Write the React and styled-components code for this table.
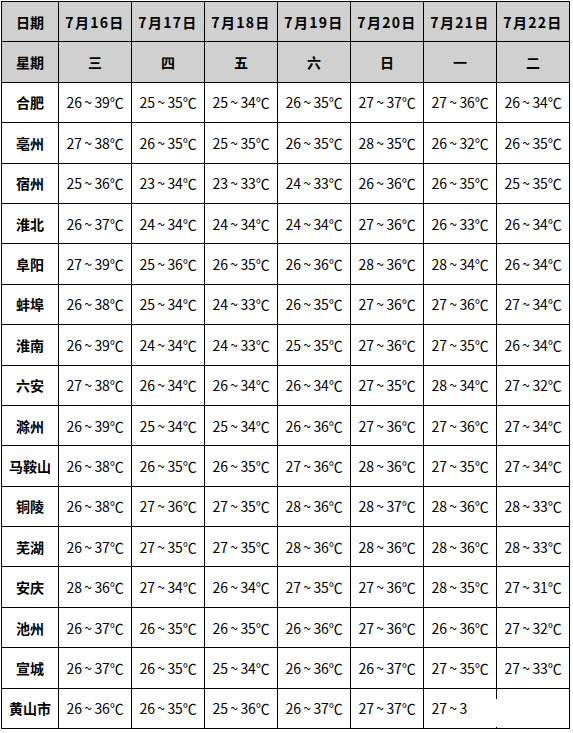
import React from "react";
import styled, { createGlobalStyle } from "styled-components";

const GlobalStyle = createGlobalStyle`
  html, body {
    margin: 0;
    padding: 0;
    background: #ffffff;
  }
  body {
    font-family: "Noto Sans CJK SC", "Noto Sans", sans-serif;
  }
`;

const dates = ["7月16日", "7月17日", "7月18日", "7月19日", "7月20日", "7月21日", "7月22日"];
const weekdays = ["三", "四", "五", "六", "日", "一", "二"];

// city, then low/high per day
const rows = [
  ["合肥", "26~39", "25~35", "25~34", "26~35", "27~37", "27~36", "26~34"],
  ["亳州", "27~38", "26~35", "25~35", "26~35", "28~35", "26~32", "26~35"],
  ["宿州", "25~36", "23~34", "23~33", "24~33", "26~36", "26~35", "25~35"],
  ["淮北", "26~37", "24~34", "24~34", "24~34", "27~36", "26~33", "26~34"],
  ["阜阳", "27~39", "25~36", "26~35", "26~36", "28~36", "28~34", "26~34"],
  ["蚌埠", "26~38", "25~34", "24~33", "26~35", "27~36", "27~36", "27~34"],
  ["淮南", "26~39", "24~34", "24~33", "25~35", "27~36", "27~35", "26~34"],
  ["六安", "27~38", "26~34", "26~34", "26~34", "27~35", "28~34", "27~32"],
  ["滁州", "26~39", "25~34", "25~34", "26~36", "27~36", "27~36", "27~34"],
  ["马鞍山", "26~38", "26~35", "26~35", "27~36", "28~36", "27~35", "27~34"],
  ["铜陵", "26~38", "27~36", "27~35", "28~36", "28~37", "28~36", "28~33"],
  ["芜湖", "26~37", "27~35", "27~35", "28~36", "28~36", "28~36", "28~33"],
  ["安庆", "28~36", "27~34", "26~34", "27~35", "27~36", "28~35", "27~31"],
  ["池州", "26~37", "26~35", "26~35", "26~36", "27~36", "26~36", "27~32"],
  ["宣城", "26~37", "26~35", "25~34", "26~36", "26~37", "27~35", "27~33"],
  ["黄山市", "26~36", "26~35", "25~36", "26~37", "27~37", "27~36", "27~33"],
];

export default function App() {
  return (
    <Page>
      <GlobalStyle />
      <TableWrap>
        <Grid>
          <HeadCell>日期</HeadCell>
          {dates.map((d) => (
            <HeadCell key={d} $spaced>
              {d}
            </HeadCell>
          ))}
          <HeadCell>星期</HeadCell>
          {weekdays.map((w) => (
            <HeadCell key={w}>{w}</HeadCell>
          ))}
          {rows.map((row) => (
            <React.Fragment key={row[0]}>
              <CityCell>{row[0]}</CityCell>
              {row.slice(1).map((t, i) => (
                <TempCell key={i}>{t.replace("~", "\u2009~\u2009")}℃</TempCell>
              ))}
            </React.Fragment>
          ))}
        </Grid>
        {/* blank patch covering the last cells */}
        <Cover />
      </TableWrap>
    </Page>
  );
}

const Page = styled.div`
  width: 573px;
  height: 733px;
  padding: 1px 0 0 1px;
  box-sizing: border-box;
  background: #ffffff;
`;

const TableWrap = styled.div`
  position: relative;
  width: 569px;
`;

const Grid = styled.div`
  display: grid;
  grid-template-columns: 57px repeat(7, 73px);
  grid-template-rows: repeat(18, 1fr);
  height: 728px;
  box-sizing: border-box;
  border-top: 1px solid #000;
  border-left: 1px solid #000;
`;

const Cell = styled.div`
  display: flex;
  align-items: center;
  justify-content: center;
  border-right: 1px solid #000;
  border-bottom: 1px solid #000;
  color: #000;
  white-space: nowrap;
  overflow: hidden;
`;

const HeadCell = styled(Cell)`
  background: #d0d0d0;
  font-weight: 700;
  font-size: 14px;
  letter-spacing: ${(p) => (p.$spaced ? "1.3px" : "0")};
`;

const CityCell = styled(Cell)`
  font-weight: 700;
  font-size: 14px;
`;

const TempCell = styled(Cell)`
  font-size: 14px;
  font-weight: 400;
  letter-spacing: -0.2px;
`;

const Cover = styled.div`
  position: absolute;
  left: 466px;
  top: 698px;
  width: 100px;
  height: 28px;
  background: #ffffff;
`;
